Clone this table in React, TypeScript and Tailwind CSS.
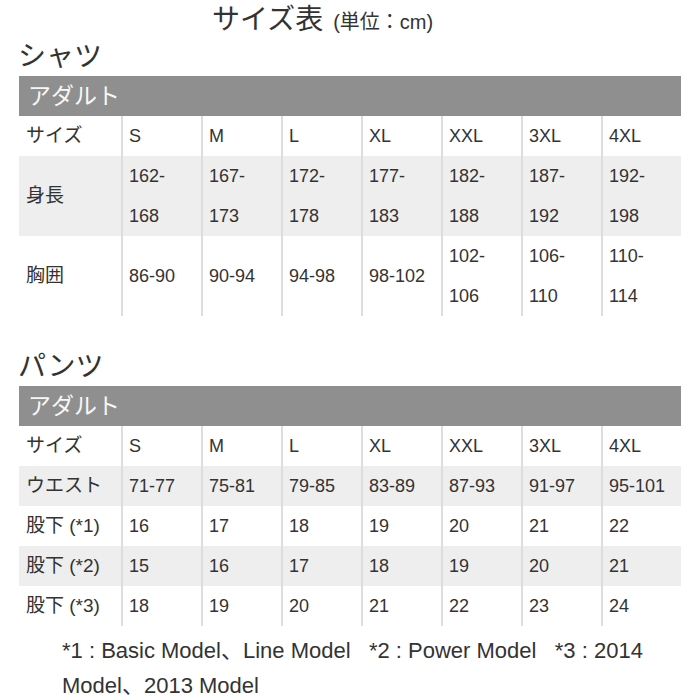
const sizes = ["S", "M", "L", "XL", "XXL", "3XL", "4XL"]

type Row = { label: string; cells: string[][]; tall?: boolean }

const shirtRows: Row[] = [
  { label: "サイズ", cells: sizes.map((s) => [s]) },
  {
    label: "身長",
    tall: true,
    cells: [
      ["162-", "168"],
      ["167-", "173"],
      ["172-", "178"],
      ["177-", "183"],
      ["182-", "188"],
      ["187-", "192"],
      ["192-", "198"],
    ],
  },
  {
    label: "胸囲",
    tall: true,
    cells: [
      ["86-90"],
      ["90-94"],
      ["94-98"],
      ["98-102"],
      ["102-", "106"],
      ["106-", "110"],
      ["110-", "114"],
    ],
  },
]

const pantsRows: Row[] = [
  { label: "サイズ", cells: sizes.map((s) => [s]) },
  { label: "ウエスト", cells: ["71-77", "75-81", "79-85", "83-89", "87-93", "91-97", "95-101"].map((s) => [s]) },
  { label: "股下 (*1)", cells: ["16", "17", "18", "19", "20", "21", "22"].map((s) => [s]) },
  { label: "股下 (*2)", cells: ["15", "16", "17", "18", "19", "20", "21"].map((s) => [s]) },
  { label: "股下 (*3)", cells: ["18", "19", "20", "21", "22", "23", "24"].map((s) => [s]) },
]

function SizeTable({ title, rows }: { title: string; rows: Row[] }) {
  return (
    <section>
      <h2 className="pl-[18px] h-[38px] text-[28px] leading-[38px] text-[#333]">{title}</h2>
      <div className="ml-[19px] w-[662px]">
        <div className="h-10 bg-[#8f8f8f] pl-[9px] text-[23px] leading-10 text-[#f7f7f7]">アダルト</div>
        {rows.map((row, i) => (
          <div key={i} className={`flex ${i % 2 === 1 ? "bg-[#eeeeee]" : "bg-white"}`}>
            <div className="w-[102px] shrink-0 flex items-center pl-[7px] text-[19px] text-[#333]">{row.label}</div>
            {row.cells.map((c, j) => (
              <div
                key={j}
                className={`w-20 shrink-0 border-l-2 border-[#dddddd] pl-[6px] flex flex-col justify-center text-[18px] leading-10 text-[#333] ${row.tall ? "h-20" : "h-10"}`}
              >
                {c.map((t, k) => (
                  <span key={k}>{t}</span>
                ))}
              </div>
            ))}
          </div>
        ))}
      </div>
    </section>
  )
}

export default function App() {
  return (
    <div className="w-[700px] h-[700px] bg-white overflow-hidden font-['Liberation_Sans','Noto_Sans_CJK_JP',sans-serif]">
      <h1 className="h-[38px] pl-[212px] pt-[2px] leading-[36px] text-[#333]">
        <span className="text-[28px]">サイズ表</span>
        <span className="text-[20px] ml-[10px]">(単位：cm)</span>
      </h1>
      <SizeTable title="シャツ" rows={shirtRows} />
      <div className="h-[32px]" />
      <SizeTable title="パンツ" rows={pantsRows} />
      <p className="mt-[7px] pl-[62px] pr-[10px] text-[22px] leading-[35px] text-[#333]">
        *1 : Basic Model、Line Model&nbsp;&nbsp; *2 : Power Model&nbsp;&nbsp; *3 : 2014 Model、2013 Model
      </p>
    </div>
  )
}
